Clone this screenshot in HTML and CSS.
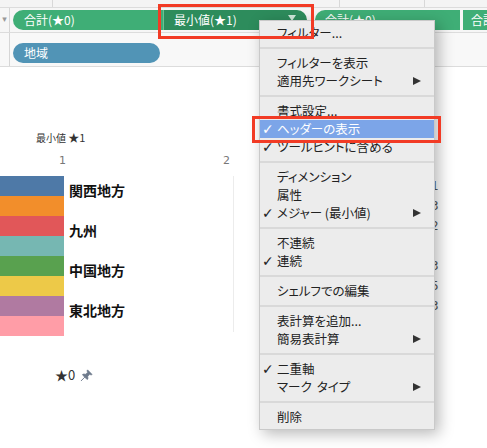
FILE: index.html
```html
<!DOCTYPE html>
<html lang="ja">
<head>
<meta charset="utf-8">
<link rel="stylesheet" href="styles.css">
</head>
<body>
<div class="page">
  <div class="topstrip">
    <span class="tcell c1"></span><span class="tcell c2"></span><span class="tcell c3"></span><span class="tcell c4"></span>
  </div>
  <div class="shelf row1">
    <div class="shelf-handle">▾</div>
    <div class="pills">
      <div class="pill green p-sum">合計(★0)</div>
      <div class="pill dark p-min">最小値(★1)<span class="caret"></span></div>
      <div class="pill green p-sum2">合計(★0)</div>
      <div class="pill green p-sum3">合計(★0)</div>
    </div>
  </div>
  <div class="shelf row2">
    <div class="shelf-handle"></div>
    <div class="pills">
      <div class="pill blue p-region">地域</div>
    </div>
  </div>

  <div class="chart">
    <div class="axis-title">最小値 <span class="big">★1</span></div>
    <div class="axis-ticks"><span class="tick t1">1</span><span class="tick t2">2</span></div>
    <div class="plot">
      <div class="bars">
        <div class="bar c-blue"></div>
        <div class="bar c-orange"></div>
        <div class="bar c-red"></div>
        <div class="bar c-teal"></div>
        <div class="bar c-green"></div>
        <div class="bar c-yellow"></div>
        <div class="bar c-purple"></div>
        <div class="bar c-pink"></div>
      </div>
      <div class="labels">
        <div class="label">関西地方</div>
        <div class="label">九州</div>
        <div class="label">中国地方</div>
        <div class="label">東北地方</div>
      </div>
      <div class="side-nums">
        <div>1</div><div>3</div><div>2</div><div>,</div><div>3</div><div>5</div><div>3</div><div>,</div>
      </div>
    </div>
    <div class="legend">★0
      <svg class="pin" width="13" height="13" viewBox="0 0 12 12"><path d="M7 0.8 L11.2 5 L10.2 5.6 L9 4.9 L7.2 6.8 L7.4 9 L6.6 9.8 L4.4 7.6 L1 11 L0.9 11.1 L1 10.9 L4.4 7.6 L2.2 5.4 L3 4.6 L5.2 4.8 L7.1 3 L6.4 1.8 Z" fill="#6d7a8c" stroke="#6d7a8c" stroke-width="0.6" stroke-linejoin="round"/></svg>
    </div>
  </div>

  <div class="menu">
    <div class="item">フィルター...</div>
    <div class="sep"></div>
    <div class="item">フィルターを表示</div>
    <div class="item sub">適用先ワークシート</div>
    <div class="sep"></div>
    <div class="item">書式設定...</div>
    <div class="item checked active">ヘッダーの表示</div>
    <div class="item checked">ツールヒントに含める</div>
    <div class="sep"></div>
    <div class="item">ディメンション</div>
    <div class="item">属性</div>
    <div class="item checked sub">メジャー (最小値)</div>
    <div class="sep"></div>
    <div class="item">不連続</div>
    <div class="item checked">連続</div>
    <div class="sep"></div>
    <div class="item">シェルフでの編集</div>
    <div class="sep"></div>
    <div class="item">表計算を追加...</div>
    <div class="item sub">簡易表計算</div>
    <div class="sep"></div>
    <div class="item checked">二重軸</div>
    <div class="item sub">マーク<span class="gap"></span>タイプ</div>
    <div class="sep"></div>
    <div class="item">削除</div>
  </div>

  <div class="callout callout-pill"></div>
  <div class="callout callout-item"></div>
</div>
</body>
</html>
```

FILE: styles.css
```css
* { box-sizing: border-box; }
html, body { margin: 0; padding: 0; background: #fff; }
body {
  width: 487px;
  height: 448px;
  overflow: hidden;
  font-family: "Noto Sans CJK JP", "Noto Sans", "Liberation Sans", sans-serif;
  color: #222;
}
.page { position: relative; width: 487px; height: 448px; }

.topstrip {
  height: 8px;
  background: #f4f4f4;
  border-bottom: 1px solid #dcdcdc;
  display: flex;
}
.tcell { height: 100%; border-right: 1px solid #d8d8d8; }
.tcell.c1 { width: 53px; }
.tcell.c2 { width: 287px; }
.tcell.c3 { width: 85px; }
.tcell.c4 { flex: 1; border-right: 0; }

.shelf {
  display: flex;
  background: #f6f6f6;
  border-bottom: 1px solid #dcdcdc;
}
.row1 { height: 25px; }
.row2 { height: 34px; background: #f8f8f8; }
.shelf-handle {
  width: 10px;
  border-right: 1px solid #d6d6d6;
  color: #999;
  font-size: 9px;
  line-height: 22px;
  text-align: center;
  font-family: "DejaVu Sans", sans-serif;
}
.pills {
  display: flex;
  align-items: center;
  padding-left: 3px;
  flex: 1;
  overflow: hidden;
}
.row2 .pills { align-items: flex-start; padding-top: 10px; }

.pill {
  height: 20px;
  line-height: 20px;
  color: #fff;
  font-size: 12px;
  padding-left: 11px;
  white-space: nowrap;
  position: relative;
  flex: none;
}
.green { background: #3fae76; }
.dark { background: #2d8c5c; }
.blue { background: #5194b6; }

.p-sum { width: 150px; border-radius: 10px 0 0 10px; }
.p-min { width: 144px; border-radius: 0 10px 10px 0; padding-left: 10px; border-left: 1px solid #6cc094; }
.p-sum2 { width: 145px; margin-left: 8px; border-radius: 10px 0 0 10px; padding-left: 10px; }
.p-sum3 { width: 40px; margin-left: 3px; border-radius: 0; padding-left: 8px; }
.p-region { width: 147px; border-radius: 10px; }
.caret {
  position: absolute;
  right: 11px;
  top: 5px;
  width: 0;
  height: 0;
  border-top: 6px solid #cfe9db;
  border-left: 4px solid transparent;
  border-right: 4px solid transparent;
}

.chart { margin-top: 64px; }
.axis-title {
  padding-left: 36px;
  font-size: 10px;
  line-height: 12px;
  height: 12px;
  color: #333;
}
.axis-title .big { font-size: 11px; }
.axis-ticks {
  margin-top: 11px;
  height: 14px;
  position: relative;
  display: flex;
  font-size: 11px;
  line-height: 14px;
  color: #777;
  font-family: "DejaVu Sans", sans-serif;
}
.tick.t1 { margin-left: 59px; }
.tick.t2 { margin-left: 157px; }

.plot { margin-top: 8px; display: flex; }
.bars { width: 64px; display: flex; flex-direction: column; }
.bar { height: 20px; }
.c-blue { background: #4e79a7; }
.c-orange { background: #f28e2b; }
.c-red { background: #e15759; }
.c-teal { background: #76b7b2; }
.c-green { background: #59a14f; }
.c-yellow { background: #edc948; }
.c-purple { background: #b07aa1; }
.c-pink { background: #ff9da7; }

.labels {
  width: 170px;
  border-right: 1px solid #ececec;
  height: 156px;
}
.label {
  height: 40px;
  padding-top: 4px;
  padding-left: 5px;
  font-size: 14px;
  line-height: 20px;
  font-weight: bold;
  color: #111;
}
.side-nums {
  margin-left: 197px;
  font-size: 12px;
  line-height: 20px;
  color: #555;
  font-family: "DejaVu Sans", sans-serif;
}
.side-nums div { height: 20px; }

.legend {
  margin-top: 31px;
  padding-left: 55px;
  font-size: 13px;
  line-height: 16px;
  color: #333;
  display: flex;
  align-items: center;
  gap: 4px;
}
.pin { margin-left: 1px; }

.menu {
  position: absolute;
  left: 259px;
  top: 20px;
  width: 176px;
  height: 410px;
  background: #ececec;
  border: 1px solid #c9c9c9;
  box-shadow: 4px 4px 14px rgba(0, 0, 0, 0.28);
  padding: 3px 0 5px;
  font-size: 12.5px;
  font-feature-settings: "palt";
  color: #222;
}
.item {
  height: 18px;
  line-height: 18px;
  padding-left: 17px;
  position: relative;
  white-space: nowrap;
}
.item .gap { display: inline-block; width: 5px; }
.item.checked::before {
  content: "✓";
  position: absolute;
  left: 2px;
  top: 0;
  font-family: "DejaVu Sans", sans-serif;
  font-size: 14px;
}
.item.sub::after {
  content: "";
  position: absolute;
  right: 13px;
  top: 5px;
  border-left: 8px solid #333;
  border-top: 4.5px solid transparent;
  border-bottom: 4.5px solid transparent;
}
.item.active { background: #7ca5e8; color: #fff; }
.sep {
  height: 12px;
  position: relative;
}
.sep::after {
  content: "";
  position: absolute;
  left: 0;
  right: 0;
  top: 5px;
  height: 2px;
  background: #d9d9d9;
}

.callout {
  position: absolute;
  border: 3px solid #f23b25;
}
.callout-pill { left: 158px; top: 4px; width: 156px; height: 35px; }
.callout-item { left: 252px; top: 116px; width: 189px; height: 27px; }
```
